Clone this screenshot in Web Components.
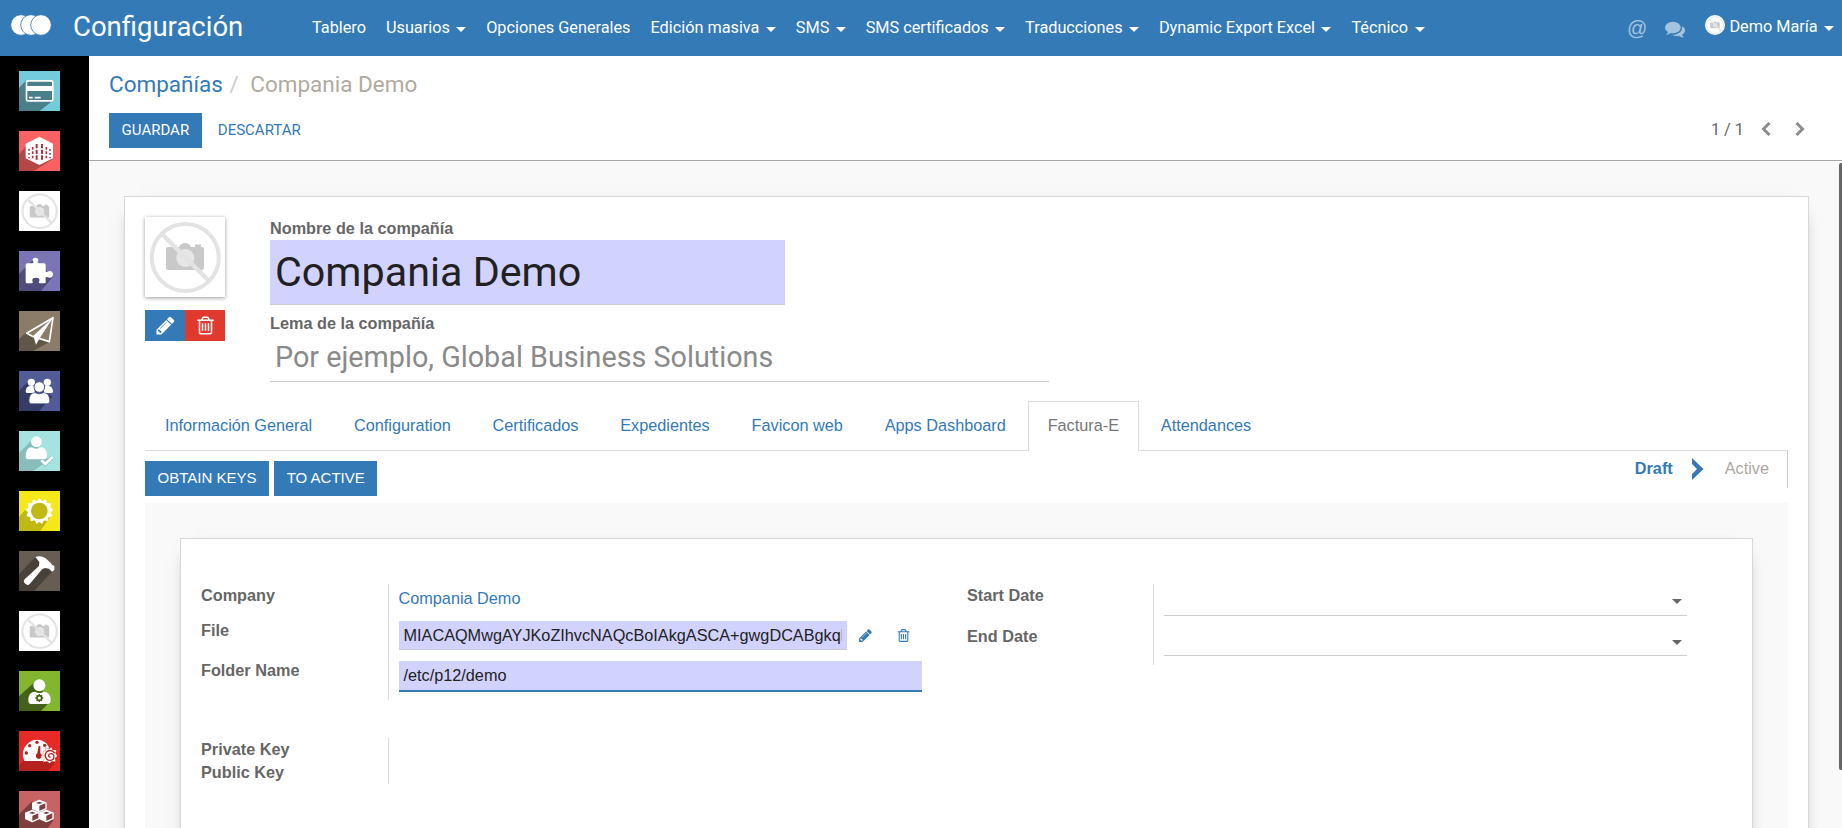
<!DOCTYPE html>
<html lang="es">
<head>
<meta charset="utf-8">
<title>Configuración</title>
<style>
html,body{margin:0;height:100%;overflow:hidden;background:#fff}
body{font:16.25px/23px "Liberation Sans",Arial,sans-serif;color:#666}
</style>
</head>
<body>
<app-shell></app-shell>
<script>
const PENCIL='M491 1536l91-91-235-235-91 91v107h128v128h107zm523-928q0-22-22-22-10 0-17 7l-542 542q-7 7-7 17 0 22 22 22 10 0 17-7l542-542q7-7 7-17zm-54-192l416 416-832 832h-416v-416zm683 96q0 53-37 90l-166 166-416-416 166-165q36-38 90-38 53 0 91 38l235 234q37 39 37 91z';
const TRASH='M704 736v576q0 14-9 23t-23 9h-64q-14 0-23-9t-9-23v-576q0-14 9-23t23-9h64q14 0 23 9t9 23zm256 0v576q0 14-9 23t-23 9h-64q-14 0-23-9t-9-23v-576q0-14 9-23t23-9h64q14 0 23 9t9 23zm256 0v576q0 14-9 23t-23 9h-64q-14 0-23-9t-9-23v-576q0-14 9-23t23-9h64q14 0 23 9t9 23zm128 724v-948h-896v948q0 22 7 40.5t14.5 27 10.5 8.5h832q3 0 10.5-8.5t14.5-27 7-40.5zm-672-1076h448l-48-117q-7-9-17-11h-317q-10 2-17 11zm928 32v64q0 14-9 23t-23 9h-96v948q0 83-47 143.5t-113 60.5h-832q-66 0-113-58.5t-47-141.5v-952h-96q-14 0-23-9t-9-23v-64q0-14 9-23t23-9h309l70-167q15-37 54-63t79-26h320q40 0 79 26t54 63l70 167h309q14 0 23 9t9 23z';
const COMMENTS='M1408 768q0 139-94 257t-256.5 186.5-353.5 68.5q-86 0-176-16-124 88-278 128-36 9-86 16h-3q-11 0-20.5-8t-11.5-21q-1-3-1-6.5t.5-6.5 2-6l2.5-5 3.5-5.5 4-5 4.5-5 4-4.5q5-6 23-25t26-29.5 22.5-29 25-38.5 20.5-44q-124-72-195-177t-71-224q0-139 94-257t256.5-186.5 353.5-68.5 353.5 68.5 256.5 186.5 94 257zm384 256q0 120-71 224.5t-195 176.5q10 24 20.5 44t25 38.5 22.5 29 26 29.5 23 25q1 1 4 4.5t4.5 5 4 5 3.5 5.5l2.5 5 2 6 .5 6.5-1 6.5q-3 14-13 22t-22 7q-50-7-86-16-154-40-278-128-90 16-176 16-271 0-472-132 58 4 88 4 161 0 309-45t264-129q125-92 192-212t67-254q0-77-23-152 129 71 204 178t75 230z';

// Missing-picture drawing, 80x80 units
const NOPHOTO=`<rect width="80" height="80" fill="#fff"/><path fill="#c9c9c9" d="M23 30h11q2-4 6-4t6 4h4v-2.500h6V30h1q2 0 2 2v19q0 2-2 2H23q-2 0-2-2V32q0-2 2-2z"/><circle cx="40.300" cy="41" r="9" fill="#e6e6e6"/><circle cx="40.300" cy="40.500" r="33.500" fill="none" stroke="#e3e3e3" stroke-width="4"/><path d="M17 17l47 47" stroke="#e3e3e3" stroke-width="4.500"/>`;

// App tiles, 123x120 units: background, long shadow, glyph
const W='fill="#fff"';
const TILES={
card:['#73cbdb','#498089','M20 30L0 51V120H62L103 88Z','<rect x="22.500" y="29.500" width="79" height="60" rx="5" fill="#498089" stroke="#fff" stroke-width="5"/><path d="M24 45h76v15H24z" fill="#fff"/><path d="M30 80h11M47 80h18" stroke="#fff" stroke-width="5"/>'],
building:['#f96262','#b44646','M22 45L0 68V120H45L100 85Z','<path '+W+' d="M61 17l41 21v44L61 102 20 82V38z"/><path d="M53 39V88M69 39V88" stroke="#b3303c" stroke-width="6" stroke-dasharray="13 4"/><path d="M41 48V86M82 48V86" stroke="#b3303c" stroke-width="5" stroke-dasharray="8 5"/><path d="M30 54V82M93 54V82" stroke="#b3303c" stroke-width="5" stroke-dasharray="5 7"/>'],
photo:['#fff'],
puzzle:['#7b75b5','#504c7c','M42 27L0 68V120H66L103 76Z','<path '+W+' d="M20 42q0-5 5-5h16q3-1 2-5-7-11 6-12 13 1 7 12-1 4 2 5h17q5 0 5 5v18q1 4 5 2 14-6 17 6 1 13-12 12-9-5-10 1v13q1 3-5 3H62q-5-1-1-7 3-10-10-10-13 0-11 10 4 6-2 7H25q-5 0-5-4z"/>'],
plane:['#8a7c68','#615748','M20 65L0 84V120H42L92 93Z','<path d="M102 20L23 67l20 10L91 92z" fill="none" stroke="#fff" stroke-width="5" stroke-linejoin="round"/><path '+W+' d="M102 20L43 74l8 27 10-18z"/>'],
users:['#515c96','#353d66','M28 31L0 59V120H60L100 77Z','<g '+W+'><circle cx="37" cy="34" r="11"/><circle cx="85" cy="34" r="11"/><path d="M20 62q0-18 17-18h10v22H26q-6 0-6-4zM102 62q0-18-17-18H75v22h21q6 0 6-4z"/></g><circle cx="61" cy="48" r="16" '+W+' stroke="#515c96" stroke-width="3"/><path '+W+' stroke="#515c96" stroke-width="2" d="M30 90q0-25 19-25 12 7 24 0 19 0 19 25 0 8-8 8H38q-8 0-8-8z"/>'],
usercheck:['#a5e3e1','#88bdbb','M38 28L0 66V120H43L90 87Z','<circle cx="52" cy="32" r="16" '+W+'/><path '+W+' d="M20 76q0-27 18-27 14 8 28 0 18 0 18 27 0 9-9 9H28q-8 0-8-9z"/><path d="M67 88l12 11 22-21" fill="none" stroke="#88bdbb" stroke-width="12"/><path d="M67 88l12 11 22-21" fill="none" stroke="#fff" stroke-width="8"/>'],
sun:['#f5e81a','#c2b814','M35 40L0 77V120H64L92 81Z','<polygon '+W+' points="61,21 69,31 80,25 84,37 96,37 94,49 103,56 95,64 100,75 88,79 87,91 75,88 69,99 61,92 53,99 47,88 35,91 34,79 22,75 27,64 19,56 28,49 26,37 38,37 42,25 53,31"/><circle cx="61" cy="60" r="25" fill="#c2b814"/>'],
hammer:['#665e53','#48423a','M49 18L0 69V120H45L105 56Z','<path '+W+' d="M49 18q16-6 31 4l16 15q2 6 10 8v12l-7 5-9-9-12-2-8 3-38 45q-5 6-11 1l-5-5q-4-5 1-10l43-40 1-12z"/>'],
photo2:['#fff'],
usergear:['#82b631','#446119','M48 32L0 76V120H66L95 90Z','<circle cx="61" cy="43" r="18" '+W+'/><path '+W+' d="M28 88q0-26 20-26 13 8 26 0 21 0 21 26 0 11-9 11H36q-8 0-8-11z"/><circle cx="61" cy="81" r="7" fill="none" stroke="#446119" stroke-width="5"/><path d="M61 69v5M61 88v5M49 81h5M68 81h5M53 73l3 3M66 86l3 3M69 73l-3 3M56 86l-3 3" stroke="#446119" stroke-width="4"/>'],
gauge:['#e52a27','#b5211f','M14 86L0 105V120H86L110 94Z','<path '+W+' d="M16 90Q4 62 22 42 42 19 70 29q15 6 20 21L80 90z"/><g fill="#b5211f"><circle cx="22" cy="66" r="5"/><circle cx="32" cy="44" r="5"/><circle cx="54" cy="34" r="5"/><circle cx="77" cy="43" r="5"/><path d="M59 45h5v22a9 9 0 1 1-9 0z"/></g><polygon '+W+' stroke="#b5211f" points="78,49 90,55 97,48 101,57 113,57 109,67 115,75 108,82 110,92 99,91 92,97 84,91 73,94 73,84 65,77 72,70 72,60 81,60"/><path d="M107 66q-10-12-22-5-11 10-3 22 10 10 21 1 6-12-5-16-9-1-9 6 1 6 6 4" fill="none" stroke="#b5211f" stroke-width="4"/>'],
cubes:['#c66363','#7f3e3e','M40 30L0 70V120H80L104 87Z','<g stroke="#fff" stroke-width="4" stroke-linejoin="round" fill="#7f3e3e"><path d="M41 36l20-8 20 8v17l-20 9-20-9z"/><path d="M20 66l20-8 20 8v17l-20 9-20-9zM62 66l20-8 20 8v17l-20 9-20-9z"/></g><path '+W+' d="M41 36l20-8 20 8-20 8zM41 36l20 8v18l-20-9zM20 66l20-8 20 8-20 8zM20 66l20 8v18l-20-9zM62 66l20-8 20 8-20 8zM62 66l20 8v18l-20-9z"/><path d="M51 36l10-4 10 4-10 3zM30 66l10-4 10 4-10 3zM72 66l10-4 10 4-10 3z" fill="#7f3e3e"/>']
};

function define(name,css,html){
  customElements.define(name,class extends HTMLElement{
    connectedCallback(){
      if(this.shadowRoot)return;
      const t=document.createElement('template');
      t.innerHTML='<style>'+css+'</style>'+(typeof html==='function'?html(this):html);
      this.attachShadow({mode:'open'}).append(t.content.cloneNode(true));
    }
  });
}

define('app-tile',':host{display:block;width:41px;height:40px}svg{display:block;width:41px;height:40px}',el=>{
  const [bg,shadow,path,glyph]=TILES[el.getAttribute('icon')];
  return glyph?`<svg viewBox="0 0 123 120"><rect width="123" height="120" fill="${bg}"/><path d="${path}" fill="${shadow}"/>${glyph}</svg>`
    :`<svg viewBox="0 0 80 80" preserveAspectRatio="none">${NOPHOTO}</svg>`;
});

define('fa-icon',':host{display:block}svg{display:block;width:100%;height:100%;fill:currentColor}',el=>
  `<svg viewBox="0 0 1792 1792"><path d="${{pencil:PENCIL,trash:TRASH,comments:COMMENTS}[el.getAttribute('name')]}"/></svg>`);

define('nav-item',`:host{display:flex;align-items:center;padding:0 10px;white-space:nowrap;line-height:56px}
 :host([menu])::after{content:"";margin:2px 0 0 6.400px;border:5px solid transparent;border-top-color:currentColor;border-bottom:0}`,'<slot></slot>');

define('top-bar',`:host{display:flex;height:56px;background:#337ab7;color:#fff;font:16.25px/54px Roboto,sans-serif}
 .logo{width:42px;height:22px;margin:14px 0 0 10px}
 h1{margin:0;font-size:27.500px;font-weight:400;line-height:53px;width:229px;padding-left:21px}
 nav{display:flex;height:56px}
 .right{margin-left:auto;display:flex;align-items:flex-start}
 .at{font:20px/56px "Liberation Sans",sans-serif;opacity:.55;margin-right:18px}
 fa-icon{width:20px;height:20px;margin:19px 20px 0 0;opacity:.55}
 .av{width:20px;height:20px;margin-top:15px;border-radius:50%}
 .user{padding:0 8px 0 4px;line-height:54px}`,
`<svg class="logo" viewBox="10 14 42 22"><g fill="#fff" stroke="#337ab7" stroke-width=".8"><circle cx="21" cy="25" r="10.300"/><circle cx="31" cy="25" r="10.300"/><circle cx="41" cy="25" r="10.300"/></g></svg>
<h1>Configuración</h1>
<nav><nav-item>Tablero</nav-item><nav-item menu>Usuarios</nav-item><nav-item>Opciones Generales</nav-item><nav-item menu>Edición masiva</nav-item><nav-item menu>SMS</nav-item><nav-item menu>SMS certificados</nav-item><nav-item menu>Traducciones</nav-item><nav-item menu>Dynamic Export Excel</nav-item><nav-item menu>Técnico</nav-item></nav>
<div class="right"><span class="at">@</span><fa-icon name="comments"></fa-icon><svg class="av" viewBox="0 0 80 80">${NOPHOTO}</svg><nav-item class="user" menu>Demo María</nav-item></div>`);

define('side-bar',':host{display:flex;flex-direction:column;gap:20px;width:70px;padding:15px 0 0 19px;background:#000;overflow:hidden}app-tile{flex:none}',
  ['card','building','photo','puzzle','plane','users','usercheck','sun','hammer','photo2','usergear','gauge','cubes'].map(i=>`<app-tile icon="${i}"></app-tile>`).join(''));

define('x-button',`:host{display:block;height:35px;line-height:var(--lh,35px);padding:0 12.600px;font-size:15px;text-transform:uppercase;background:#337ab7;color:#fff;white-space:nowrap}
 :host([link]){background:none;color:#337ab7}`,'<slot></slot>');

define('control-panel',`:host{display:block;height:104px;border-bottom:1px solid #a8a8a8;background:#fff;font-family:Roboto,sans-serif}
 .crumbs{display:flex;padding:12px 0 1px 20px;font-size:22.500px;line-height:32px;color:#b0aa9f}
 .crumbs a{color:#337ab7}.crumbs i{font-style:normal;color:#ccc;padding:0 11.500px 0 6.500px}
 .row{display:flex;padding:12px 37px 0 20px}
 .pager{margin-left:auto;display:flex;align-items:center;height:32px;color:#666}
 svg{width:10px;height:14px;margin-left:17px;fill:none;stroke:#8c8c8c;stroke-width:3}
 svg+svg{margin-left:24px}x-button[link]{margin-left:3.500px}`,
`<div class="crumbs"><a>Compañías</a><i>/</i><span>Compania Demo</span></div>
<div class="row"><x-button>Guardar</x-button><x-button link>Descartar</x-button>
<div class="pager"><span>1 / 1</span><svg viewBox="0 0 10 14"><path d="M8.500 1L2.500 7l6 6"/></svg><svg viewBox="0 0 10 14"><path d="M1.500 1l6 6-6 6"/></svg></div></div>`);

define('company-head',`:host{display:flex;padding:20px 0 0 20px;height:184px}
 .pic{width:80px;margin-right:45px}
 .pic>svg{display:block;width:80px;height:80px;box-shadow:0 1px 4px rgba(0,0,0,.4)}
 .btns{display:flex;margin-top:13px;color:#fff}
 .btns div{width:40px;height:31px;background:#337ab7;display:flex;align-items:center;justify-content:center}
 .btns div+div{background:#e0392e}
 fa-icon{width:21px;height:21px}
 b{display:block}
 .name{width:510px;height:64px;margin-bottom:7px;padding-left:5px;border-bottom:1px solid #ccc;background:#d2d2ff;color:#212121;font:41.250px/64px Roboto,sans-serif}
 .motto{width:774px;height:47px;margin-top:-1px;padding-left:5px;border-bottom:1px solid #ccc;color:#8a8a8a;font:28.750px/46px Roboto,sans-serif}`,
`<div class="pic"><svg viewBox="0 0 80 80">${NOPHOTO}</svg><div class="btns"><div><fa-icon name="pencil"></fa-icon></div><div><fa-icon name="trash"></fa-icon></div></div></div>
<div><b>Nombre de la compañía</b><div class="name">Compania Demo</div><b>Lema de la compañía</b><div class="motto">Por ejemplo, Global Business Solutions</div></div>`);

define('tab-bar',':host{display:flex;gap:2px;height:49px;border-bottom:1px solid #ddd;margin:0 20px}','<slot></slot>');
define('tab-item',`:host{display:block;height:48px;line-height:46px;padding:0 18.950px;border:1px solid transparent;border-bottom:0;color:#337ab7;white-space:nowrap}
 :host([active]){border-color:#ddd;background:#fff;color:#777;padding-bottom:1px}`,'<slot></slot>');

define('status-row',`:host{display:flex;margin:0 20px;height:52px}
 .b{display:flex;gap:5px;padding-top:10px;--lh:34px}
 .s{margin-left:auto;display:flex;height:37px;border-right:1px solid #ccc;padding-right:18px;line-height:35px;color:#aea79f}
 b{color:#337ab7}svg{width:12px;height:22px;margin:7px 21px 0 19px;fill:#337ab7}`,
`<div class="b"><x-button>Obtain keys</x-button><x-button>To active</x-button></div><div class="s"><b>Draft</b><svg viewBox="0 0 12 22"><path d="M0 0l11.500 11L0 22v-6l5-5-5-5z"/></svg><span>Active</span></div>`);

define('field-group',':host{display:grid;grid-template-columns:var(--lw,188px) 1fr;align-content:start}','<slot></slot>');
define('field-label',':host{display:block;font-weight:700;border-right:1px solid #ddd;box-sizing:border-box;padding-left:1px;width:calc(var(--lw,188px) + 1px);height:var(--h,40px)}','<slot></slot>');
define('field-cell',`:host{display:flex;align-items:flex-start;padding-left:11px;height:var(--h,40px);box-sizing:border-box;white-space:nowrap}
 .link{color:#337ab7;margin:3px 0 0 -.5px}
 .in{flex:1;height:28px;line-height:29px;padding:0 5px 0 4.500px;border-bottom:1px solid #ccc;background:#d2d2ff;color:#222;margin-top:2px;overflow:hidden}
 .clip{overflow:hidden;width:438px;display:block}
 .file{flex:none;width:438.500px}
 .focus{height:29px;border-bottom:2px solid #337ab7}
 .date{flex:1;height:var(--d,31px);border-bottom:1px solid #ccc;display:flex;justify-content:flex-end;align-items:flex-start}
 .date::before{content:"";margin:15px 5px 0 0;border:5px solid transparent;border-top-color:#666;border-bottom:0}
 fa-icon{color:#337ab7;width:15px;height:15px;margin:9px 0 0 11px}fa-icon+fa-icon{margin-left:22.500px}`,
el=>({
 link:'<span class="link"><slot></slot></span>',
 file:'<div class="in file"><span class="clip"><slot></slot></span></div><fa-icon name="pencil"></fa-icon><fa-icon name="trash"></fa-icon>',
 text:'<div class="in focus"><slot></slot></div>',
 date:'<div class="date"></div>'})[el.getAttribute('kind')]||'');

define('inner-form',`:host{display:block;margin:0 20px;padding:35px 35px 0;height:500px;background:#f9f9f9}
 .sheet{height:500px;background:#fff;border:1px solid #d9d7d7;box-shadow:0 5px 20px -15px #000;padding:45px 65px 0 19px;box-sizing:border-box}
 .cols{display:grid;grid-template-columns:722px 721px;column-gap:44px}
 .right{--lw:187px}
 .second{margin-top:38px;width:722px}`,
`<div class="sheet"><div class="cols">
<field-group><field-label style="--h:35px">Company</field-label><field-cell style="--h:35px" kind="link">Compania Demo</field-cell>
<field-label>File</field-label><field-cell kind="file">MIACAQMwgAYJKoZIhvcNAQcBoIAkgASCA+gwgDCABgkqhkiG</field-cell>
<field-label style="--h:41px">Folder Name</field-label><field-cell style="--h:41px" kind="text">/etc/p12/demo</field-cell></field-group>
<field-group class="right"><field-label style="--h:41px">Start Date</field-label><field-cell style="--h:41px" kind="date"></field-cell><field-label>End Date</field-label><field-cell kind="date" style="--d:30px"></field-cell></field-group></div>
<field-group class="second"><field-label style="--h:23px">Private Key</field-label><field-cell style="--h:23px"></field-cell><field-label style="--h:23px">Public Key</field-label><field-cell style="--h:23px"></field-cell></field-group></div>`);

define('form-view',`:host{display:block;position:relative;flex:1;min-height:0;overflow:hidden;background:#f9f9f9;padding:35px 33px 0 35px}
 .sheet{height:900px;box-sizing:border-box;background:#fff;border:1px solid #d9d7d7;box-shadow:0 5px 20px -15px #000}
 .bar{position:absolute;right:0;top:2px;width:3px;height:607px;background:#666;border-radius:2px 0 0 2px}`,
`<div class="sheet"><company-head></company-head>
<tab-bar><tab-item>Información General</tab-item><tab-item>Configuration</tab-item><tab-item>Certificados</tab-item><tab-item>Expedientes</tab-item><tab-item>Favicon web</tab-item><tab-item>Apps Dashboard</tab-item><tab-item active>Factura-E</tab-item><tab-item>Attendances</tab-item></tab-bar>
<status-row></status-row><inner-form></inner-form></div><div class="bar"></div>`);

define('app-shell',`:host{display:flex;flex-direction:column;height:828px;overflow:hidden}
 .body{display:flex;flex:1;min-height:0}.main{flex:1;min-width:0;display:flex;flex-direction:column}`,
'<top-bar></top-bar><div class="body"><side-bar></side-bar><div class="main"><control-panel></control-panel><form-view></form-view></div></div>');
</script>
</body>
</html>
